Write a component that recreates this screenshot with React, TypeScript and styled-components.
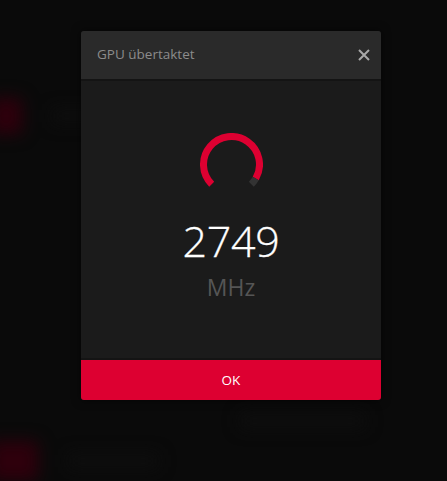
import React from "react";
import styled, { createGlobalStyle } from "styled-components";

const Global = createGlobalStyle`
  html, body { margin: 0; padding: 0; background: #0a0a0a; }
  body { font-family: "Open Sans", "Noto Sans", sans-serif; }
`;

const Page = styled.div`
  position: relative;
  width: 447px;
  height: 481px;
  overflow: hidden;
  background: #0a0a0a;
`;

const Backdrop = styled.div`
  display: flex;
  flex-direction: column;
  height: 100%;
  filter: blur(8px);
`;

const BgRow = styled.div<{ $h: number; $top: number; $indent?: number }>`
  display: flex;
  align-items: center;
  gap: 30px;
  height: ${(p) => p.$h}px;
  margin-top: ${(p) => p.$top}px;
  padding-left: ${(p) => p.$indent ?? 0}px;
`;

const Glow = styled.div<{ $w: number; $h: number }>`
  width: ${(p) => p.$w}px;
  height: ${(p) => p.$h}px;
  margin-left: -10px;
  background: #2e000c;
  border-radius: 4px;
`;

const Faint = styled.div<{ $w: number }>`
  width: ${(p) => p.$w}px;
  height: 14px;
  background: #0e0e0e;
`;

const Overlay = styled.div`
  position: absolute;
  inset: 0;
  padding: 31px 0 0 81px;
`;

const Dialog = styled.div`
  width: 300px;
  border-radius: 3px;
  overflow: hidden;
  background: #1b1b1b;
  display: flex;
  flex-direction: column;
  box-shadow: 0 0 10px rgba(0, 0, 0, 0.6);
`;

const Header = styled.div`
  height: 50px;
  background: #2a2a2a;
  border-bottom: 2px solid #141414;
  display: flex;
  align-items: center;
  justify-content: space-between;
  padding: 0 10px 0 16px;
  box-sizing: border-box;
`;

const Title = styled.div`
  color: #8c8c8c;
  font-size: 13.5px;
  padding-bottom: 2px;
`;

const Close = styled.button`
  background: none;
  border: none;
  padding: 0;
  width: 14px;
  height: 14px;
  display: flex;
  align-items: center;
  justify-content: center;
  margin-bottom: 1px;
`;

const Body = styled.div`
  height: 279px;
  border-bottom: 2px solid #141414;
  box-sizing: border-box;
  display: flex;
  flex-direction: column;
  align-items: center;
  padding-top: 52px;
`;

const Value = styled.div`
  color: #ffffff;
  font-size: 43px;
  font-weight: 300;
  line-height: 1;
  margin-top: 23px;
  letter-spacing: -0.3px;
  -webkit-text-stroke: 0.3px #ffffff;
`;

const Unit = styled.div`
  color: #555555;
  font-size: 23px;
  line-height: 1;
  margin-top: 14px;
`;

const OkButton = styled.button`
  height: 40px;
  border: none;
  background: #dd0031;
  color: #ffffff;
  font-family: "Open Sans", "Noto Sans", sans-serif;
  font-size: 13.5px;
  padding: 0;
`;

function Gauge() {
  const cx = 31.5;
  const cy = 31.5;
  const r = 28;
  const pt = (deg: number) => {
    const a = ((deg - 90) * Math.PI) / 180;
    return [cx + r * Math.cos(a), cy + r * Math.sin(a)];
  };
  const arc = (from: number, to: number) => {
    const [x1, y1] = pt(from);
    const [x2, y2] = pt(to);
    const large = to - from > 180 ? 1 : 0;
    return `M ${x1} ${y1} A ${r} ${r} 0 ${large} 1 ${x2} ${y2}`;
  };
  return (
    <svg width="63" height="63" viewBox="0 0 63 63">
      <path d={arc(-135, 120)} stroke="#dd0031" strokeWidth="7" fill="none" />
      <path d={arc(120, 135)} stroke="#333333" strokeWidth="7" fill="none" />
    </svg>
  );
}

export default function App() {
  return (
    <>
      <Global />
      <Page>
        <Backdrop>
          <BgRow $h={40} $top={96}>
            <Glow $w={32} $h={36} />
            <Faint $w={50} />
          </BgRow>
          <BgRow $h={20} $top={276} $indent={240}>
            <Faint $w={125} />
          </BgRow>
          <BgRow $h={40} $top={10}>
            <Glow $w={48} $h={40} />
            <Faint $w={90} />
          </BgRow>
        </Backdrop>
        <Overlay>
          <Dialog>
            <Header>
              <Title>GPU übertaktet</Title>
              <Close aria-label="Schließen">
                <svg width="12" height="12" viewBox="0 0 12 12">
                  <path d="M1 1 L11 11 M11 1 L1 11" stroke="#a8a8a8" strokeWidth="2" />
                </svg>
              </Close>
            </Header>
            <Body>
              <Gauge />
              <Value>2749</Value>
              <Unit>MHz</Unit>
            </Body>
            <OkButton>OK</OkButton>
          </Dialog>
        </Overlay>
      </Page>
    </>
  );
}
